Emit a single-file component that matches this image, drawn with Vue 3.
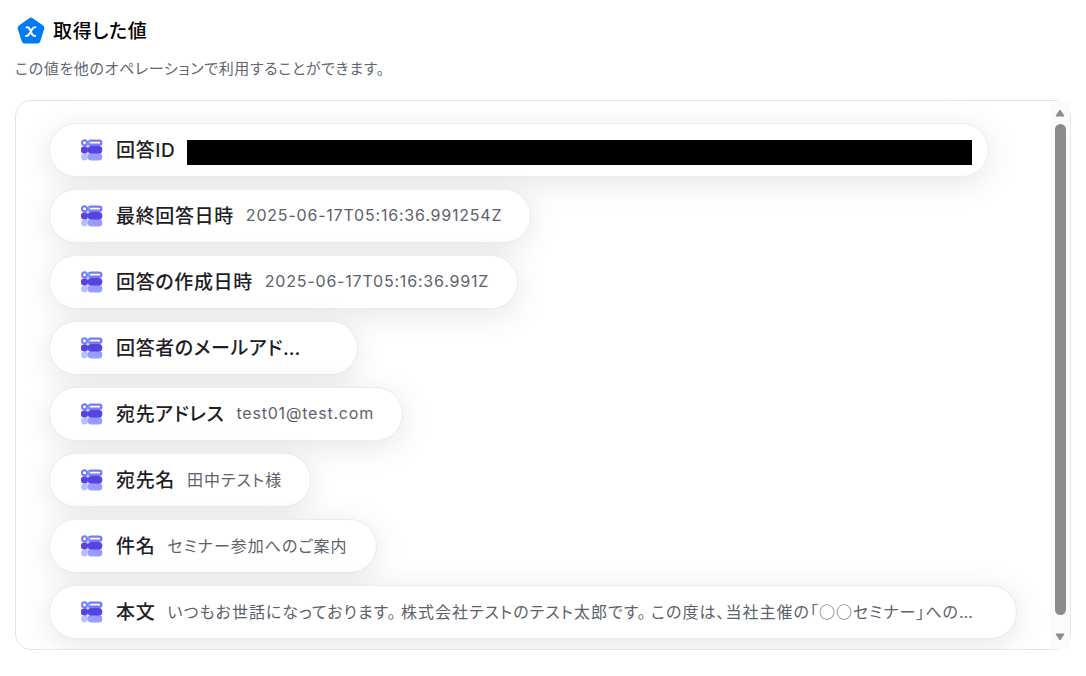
<script setup>
const outputs = [
  { label: '回答ID', value: '', redacted: true },
  { label: '最終回答日時', value: '2025-06-17T05:16:36.991254Z' },
  { label: '回答の作成日時', value: '2025-06-17T05:16:36.991Z' },
  { label: '回答者のメールアドレス', value: '' },
  { label: '宛先アドレス', value: 'test01@test.com' },
  { label: '宛先名', value: '田中テスト様', japanese: true },
  { label: '件名', value: 'セミナー参加へのご案内', japanese: true },
  {
    label: '本文',
    value:
      'いつもお世話になっております。 株式会社テストのテスト太郎です。 この度は、当社主催の「○○セミナー」へのお申し込みありがとうございます。',
    japanese: true,
  },
]
</script>

<template>
  <main class="page">
    <header class="head">
      <svg class="badge" viewBox="0 0 28 28" aria-hidden="true">
        <path
          d="M12.3 1.2a3 3 0 0 1 3.4 0l10.4 7.3a3 3 0 0 1 1.1 3.4l-4 12.6a3 3 0 0 1-2.8 2H7.6a3 3 0 0 1-2.8-2L.8 11.9a3 3 0 0 1 1.1-3.4z"
          fill="#007bf7"
        />
        <path
          d="M9.500 10.300c1.900 0 2.600.5 3.300 1.900l2 4.700c.7 1.600 1.600 2.100 3.400 2M18.300 10.300c-1.600 0-2.400.6-3.200 2l-2.800 4.600c-.8 1.400-1.600 2-3.300 2"
          fill="none"
          stroke="#fff"
          stroke-width="2"
          stroke-linecap="round"
        />
      </svg>
      <h1>取得した値</h1>
    </header>
    <p class="lead">この値を他のオペレーションで利用することができます。</p>

    <section class="panel">
      <ul class="list">
        <li v-for="item in outputs" :key="item.label" class="pill">
          <svg class="form-icon" viewBox="0 0 22 22" aria-hidden="true">
            <path d="M3.500 3h8v16h-8z" fill="#d3d5ff" />
            <circle cx="3.500" cy="18" r="3.400" fill="#b7bfff" />
            <rect x="6.800" y="14" width="14.500" height="7.500" rx="3.500" fill="#979dff" />
            <circle cx="3.500" cy="10.800" r="3.600" fill="#5544e0" />
            <rect x="5" y="9.500" width="4" height="2.600" fill="#5544e0" />
            <rect x="6.800" y="7" width="14.500" height="7.400" rx="3.500" fill="#5544e0" />
            <circle cx="3.500" cy="3.800" r="2.500" fill="#fff" stroke="#7a78fb" stroke-width="2" />
            <rect x="7.800" y="1.600" width="12.500" height="4.200" rx="2.100" fill="#fff" stroke="#7a78fb" stroke-width="2.400" />
            <path d="M7.800 2v3.600" stroke="#61adff" stroke-width="2" />
          </svg>
          <span class="label">{{ item.label }}</span>
          <span v-if="item.redacted" class="redacted"></span>
          <span v-else class="value"><span :class="{ japanese: item.japanese }">{{ item.value }}</span></span>
        </li>
      </ul>
      <div class="scrollbar" aria-hidden="true">
        <svg class="arrow" viewBox="0 0 10 8"><path d="M5 1 9 7H1z" /></svg>
        <div class="thumb"></div>
        <svg class="arrow" viewBox="0 0 10 8"><path d="M5 7 1 1h8z" /></svg>
      </div>
    </section>
  </main>
</template>

<style>
body {
  background: #fff;
}
</style>

<style scoped>
.page {
  padding: 17px 15px 24px;
  font-family: Inter, "Noto Sans CJK JP", sans-serif;
  font-feature-settings: "palt";
  letter-spacing: 0.04em;
}

.head {
  display: flex;
  align-items: center;
  gap: 8px;
  padding-left: 2px;
}

.badge {
  width: 28px;
  height: 28px;
}

h1 {
  margin: 0;
  padding-top: 2px;
  font-size: 19px;
  line-height: 26px;
  font-weight: 500;
  color: #000;
}

.lead {
  margin: 12px 0 19px;
  font-size: 15px;
  line-height: 24px;
  color: #5f6772;
}

.panel {
  display: flex;
  border: 1px solid #e4e4e4;
  border-radius: 16px;
}

.list {
  flex: 1;
  min-width: 0;
  display: flex;
  flex-direction: column;
  align-items: flex-start;
  gap: 12px;
  margin: 0;
  padding: 22px 33px 10px;
  list-style: none;
  overflow: hidden;
  border-radius: 15px 0 0 15px;
}

.pill {
  box-sizing: border-box;
  display: flex;
  align-items: center;
  gap: 12px;
  max-width: 100%;
  height: 54px;
  padding: 0 28px 0 31px;
  border: 1px solid #e9ebf3;
  border-radius: 27px;
  background: #fff;
  box-shadow: 0 6px 32px rgba(0, 0, 0, 0.1);
  white-space: nowrap;
}

.form-icon {
  flex: none;
  width: 22px;
  height: 22px;
  margin-right: 1px;
}

.label {
  flex: none;
  max-width: 201px;
  padding-top: 1px;
  overflow: hidden;
  text-overflow: ellipsis;
  font-size: 19px;
  line-height: 28px;
  font-weight: 500;
  color: #1d2127;
}

.value {
  max-width: 821px;
  padding-bottom: 2px;
  overflow: hidden;
  text-overflow: ellipsis;
  font-size: 16px;
  line-height: 24px;
  letter-spacing: 0.05em;
  color: #5c626b;
}

.japanese {
  font-family: "Noto Sans CJK JP", sans-serif;
  letter-spacing: 1px;
}

.redacted {
  width: 785px;
  height: 25px;
  margin: 4px -12px 0 0;
  background: #000;
}

.scrollbar {
  flex: none;
  display: flex;
  flex-direction: column;
  align-items: center;
  gap: 7px;
  width: 19px;
  padding: 8px 1px 8px 0;
  box-sizing: border-box;
  background: #fbfbfb;
}

.arrow {
  width: 10px;
  height: 8px;
  fill: #8b8b8b;
  stroke: #8b8b8b;
  stroke-linejoin: round;
}

.thumb {
  flex: 1;
  width: 11px;
  margin-bottom: 11px;
  border-radius: 6px;
  background: #8b8b8b;
}
</style>
